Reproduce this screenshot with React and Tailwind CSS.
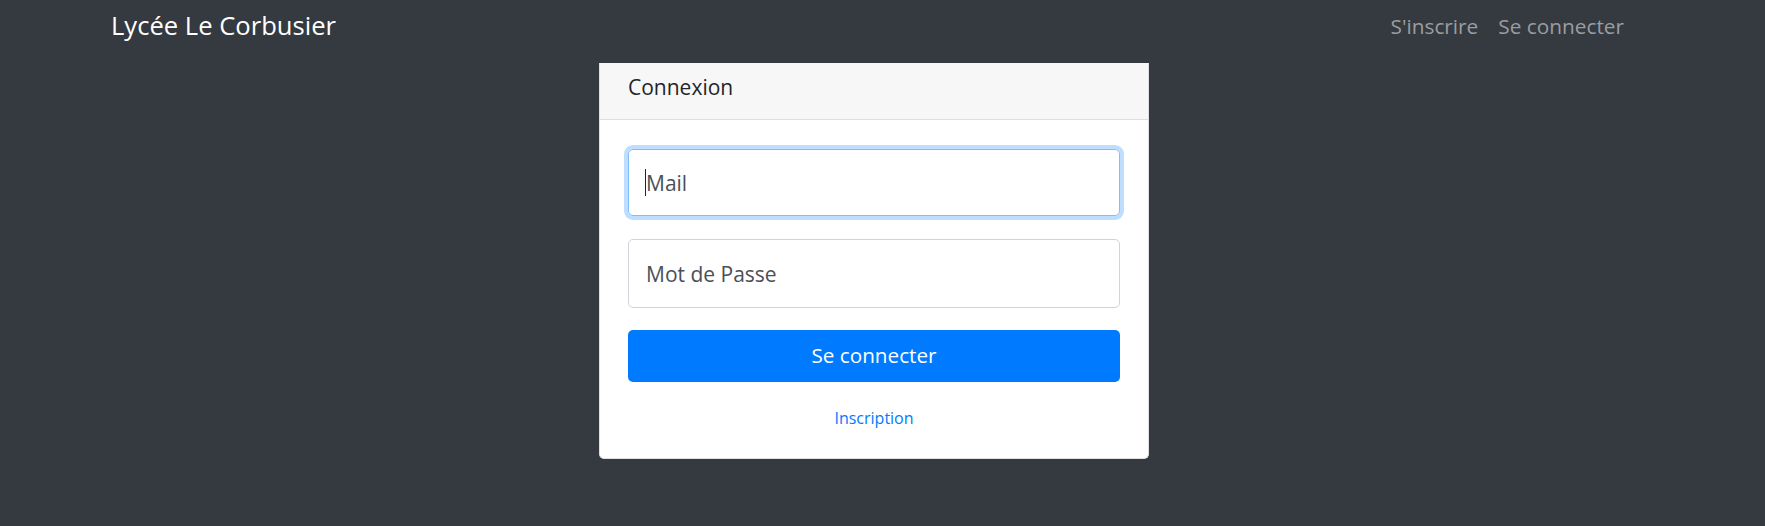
export default function App() {
    return (
        <div className="min-h-screen bg-[#343a40] font-['Open_Sans',sans-serif]">
            {/* Navbar */}
            <nav className="h-[63px] flex items-start justify-between pl-[111px] pr-[131px] pt-[10px]">
                <a href="#" className="text-white text-[25.6px] leading-[32px]">
                    Lycée Le Corbusier
                </a>
                <div className="flex items-center text-[20.8px] leading-[32px] text-[#9a9da0]">
                    <a href="#" className="px-[10px]">S'inscrire</a>
                    <a href="#" className="px-[10px]">Se connecter</a>
                </div>
            </nav>

            {/* Carte de connexion */}
            <div className="flex justify-center pr-[17px]">
                <div className="w-[550px] bg-white rounded-b-[5px] border border-[#dfdfdf] border-t-0">
                    <div className="h-[57px] bg-[#f7f7f7] border-b border-[#dfdfdf] flex items-center px-[28px] pb-[6px]">
                        <span className="text-[21px] text-[#212529]">Connexion</span>
                    </div>
                    <div className="px-[28px] pt-[29px] pb-[28px]">
                        <div className="relative">
                            <input
                                type="text"
                                placeholder="Mail"
                                className="w-full h-[67px] rounded-[5px] border border-[#80bdff] shadow-[0_0_0_4px_rgba(0,123,255,0.25)] px-[17px] text-[21px] text-[#495057] placeholder:text-[#495057] outline-none"
                            />
                            <span className="absolute left-[17px] top-[20px] w-px h-[27px] bg-[#212529]"></span>
                        </div>
                        <input
                            type="password"
                            placeholder="Mot de Passe"
                            className="mt-[23px] w-full h-[69px] rounded-[5px] border border-[#ced4da] px-[17px] text-[21px] text-[#495057] placeholder:text-[#495057] outline-none"
                        />
                        <button className="mt-[22px] w-full h-[52px] rounded-[5px] bg-[#007bff] text-white text-[20.7px]">
                            Se connecter
                        </button>
                        <div className="mt-[24px] text-center">
                            <a href="#" className="text-[16px] text-[#007bff]">
                                Inscription
                            </a>
                        </div>
                    </div>
                </div>
            </div>
        </div>
    );
}
